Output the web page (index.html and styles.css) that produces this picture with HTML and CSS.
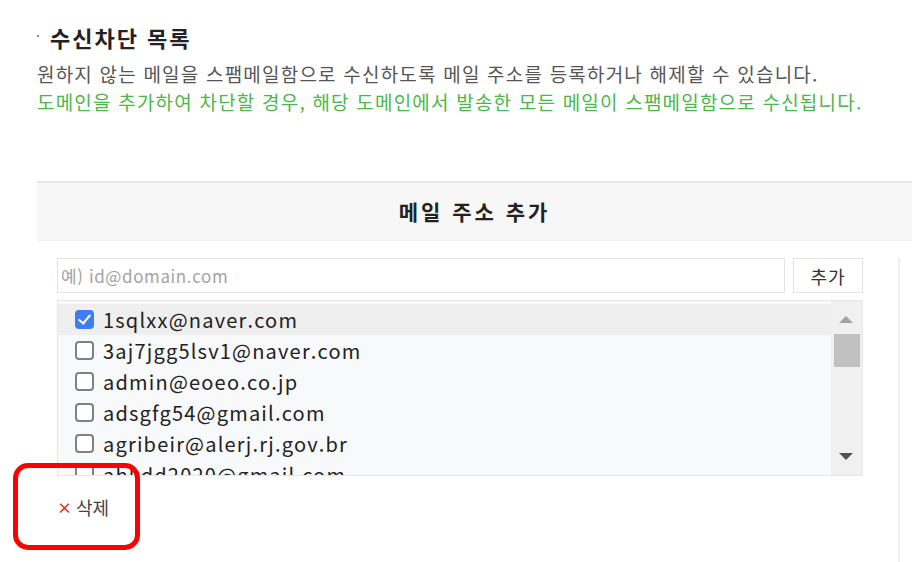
FILE: index.html
```html
<!DOCTYPE html>
<html lang="ko">
<head>
    <meta charset="UTF-8">
    <meta name="viewport" content="width=device-width, initial-scale=1.0">
    <title>수신차단 목록</title>
    <link rel="stylesheet" href="styles.css">
</head>
<body>
    <div class="page">
        <!-- Title -->
        <h2 class="title">수신차단 목록</h2>
        <p class="desc">원하지 않는 메일을 스팸메일함으로 수신하도록 메일 주소를 등록하거나 해제할 수 있습니다.</p>
        <p class="desc desc-green">도메인을 추가하여 차단할 경우, 해당 도메인에서 발송한 모든 메일이 스팸메일함으로 수신됩니다.</p>

        <!-- Panel -->
        <section class="panel">
            <div class="panel-header">메일 주소 추가</div>
            <div class="panel-body">
                <div class="panel-main">
                    <div class="add-row">
                        <input type="text" class="add-input" placeholder="예) id@domain.com">
                        <button class="add-btn">추가</button>
                    </div>

                    <div class="list-box">
                        <ul class="list">
                            <li class="list-item selected"><span class="check checked"></span>1sqlxx@naver.com</li>
                            <li class="list-item"><span class="check"></span>3aj7jgg5lsv1@naver.com</li>
                            <li class="list-item"><span class="check"></span>admin@eoeo.co.jp</li>
                            <li class="list-item"><span class="check"></span>adsgfg54@gmail.com</li>
                            <li class="list-item"><span class="check"></span>agribeir@alerj.rj.gov.br</li>
                            <li class="list-item"><span class="check"></span>ahkdd2020@gmail.com</li>
                        </ul>
                        <div class="scrollbar">
                            <span class="arrow-up"></span>
                            <span class="thumb"></span>
                            <span class="arrow-down"></span>
                        </div>
                    </div>

                    <div class="toolbar">
                        <button class="del-btn"><span class="del-x">×</span>삭제</button>
                    </div>
                </div>
                <div class="divider"></div>
            </div>
        </section>
    </div>

    <!-- highlight box -->
    <div class="mark"></div>
</body>
</html>
```

FILE: styles.css
```css
* {
    margin: 0;
    padding: 0;
    box-sizing: border-box;
}

body {
    font-family: "Noto Sans CJK KR", "Noto Sans", sans-serif;
    background: #fff;
    color: #333;
    width: 912px;
    height: 562px;
    overflow: hidden;
    position: relative;
}

.page {
    padding: 22px 0 0 37px;
}

/* Title */
.title {
    position: relative;
    font-size: 22px;
    font-weight: bold;
    line-height: 30px;
    letter-spacing: 2px;
    color: #222;
    padding-left: 13px;
}

.title::before {
    content: '';
    position: absolute;
    left: 0;
    top: 13px;
    width: 2px;
    height: 2px;
    background: #888;
}

.desc {
    font-size: 19px;
    line-height: 28px;
    letter-spacing: 1.2px;
    color: #555;
}

.title + .desc {
    margin-top: 8px;
}

.desc-green {
    color: #4cb64c;
}

/* Panel */
.panel {
    margin-top: 65px;
    width: 875px;
    border-top: 2px solid #e8e8e8;
}

.panel-header {
    height: 58px;
    background: #f7f7f7;
    border-bottom: 1px solid #efefef;
    text-align: center;
    font-size: 21px;
    font-weight: bold;
    letter-spacing: 3px;
    line-height: 56px;
    color: #222;
}

.panel-body {
    display: flex;
    padding: 17px 0 0 20px;
}

.panel-main {
    width: 806px;
}

.divider {
    width: 2px;
    height: 330px;
    margin-left: 35px;
    background: #efefef;
}

.add-row {
    display: flex;
    gap: 8px;
    height: 35px;
}

.add-input {
    flex: 1;
    border: 1px solid #e3e3e3;
    padding: 0 3px;
    font-family: inherit;
    font-size: 17px;
    letter-spacing: 0.6px;
    color: #333;
    outline: none;
}

.add-input::placeholder {
    color: #a3a3a3;
}

.add-btn {
    width: 70px;
    border: 1px solid #e3e3e3;
    background: #fff;
    font-family: inherit;
    font-size: 18px;
    letter-spacing: 1px;
    color: #333;
}

/* List */
.list-box {
    display: flex;
    margin-top: 7px;
    height: 176px;
    border: 1px solid #e6e6e6;
    background: #f8f9fa;
    overflow: hidden;
}

.list {
    flex: 1;
    list-style: none;
    padding-top: 3px;
}

.list-item {
    display: flex;
    align-items: center;
    height: 31px;
    padding-left: 17px;
    font-size: 20px;
    letter-spacing: 1.2px;
    color: #222;
}

.list-item.selected {
    background: #efefef;
}

.check {
    width: 19px;
    height: 19px;
    border: 2px solid #808080;
    border-radius: 4px;
    background: #fff;
    margin-right: 9px;
    position: relative;
    flex: none;
}

.check.checked {
    background: #3d7ff0;
    border-color: #3d7ff0;
}

.check.checked::after {
    content: '';
    position: absolute;
    left: 4px;
    top: 0px;
    width: 5px;
    height: 10px;
    border: solid #fff;
    border-width: 0 2.5px 2.5px 0;
    transform: rotate(40deg);
}

.scrollbar {
    width: 31px;
    background: #f0f0f0;
    position: relative;
}

.arrow-up,
.arrow-down {
    position: absolute;
    left: 8px;
    width: 0;
    height: 0;
    border-left: 7px solid transparent;
    border-right: 7px solid transparent;
}

.arrow-up {
    top: 15px;
    border-bottom: 7px solid #a3a3a3;
}

.arrow-down {
    top: 152px;
    border-top: 7px solid #505050;
}

.thumb {
    position: absolute;
    left: 3px;
    top: 33px;
    width: 26px;
    height: 33px;
    background: #c1c1c1;
}

/* Toolbar */
.toolbar {
    height: 62px;
    display: flex;
    align-items: center;
}

.del-btn {
    border: none;
    background: none;
    padding: 0;
    font-family: inherit;
    font-size: 18px;
    color: #444;
    display: flex;
    align-items: center;
}

.del-x {
    color: #d23b2e;
    font-weight: bold;
    font-size: 15px;
    margin-right: 4px;
}

/* red highlight overlay */
.mark {
    position: absolute;
    left: 13px;
    top: 463px;
    width: 127px;
    height: 87px;
    border: 5px solid #ff0000;
    border-radius: 15px;
}
```
